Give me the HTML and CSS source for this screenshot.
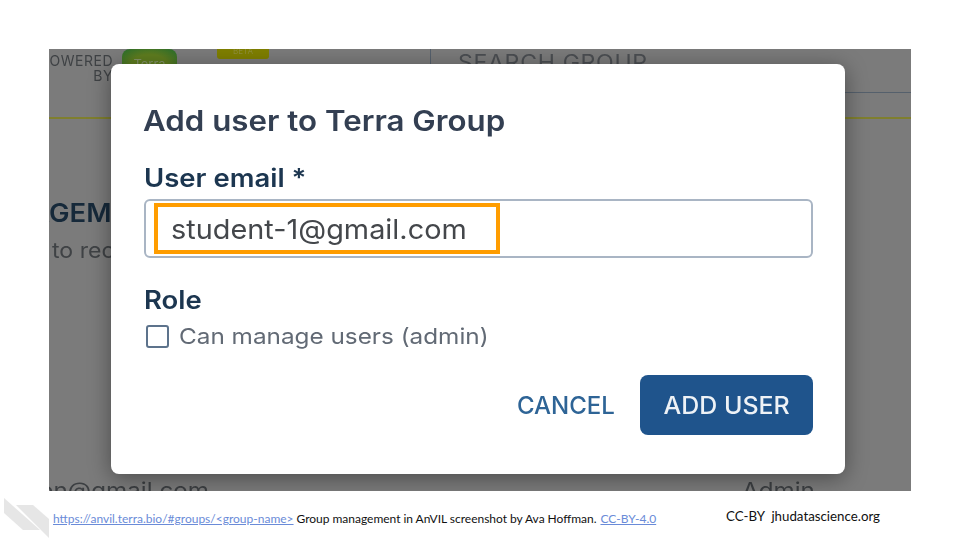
FILE: index.html
```html
<!DOCTYPE html>
<html lang="en">
<head>
<meta charset="utf-8">
<title>Add user to Terra Group</title>
<link rel="stylesheet" href="styles.css">
</head>
<body>
<div class="slide">
  <main class="shot">
    <div class="backdrop">
      <header class="topbar">
        <div class="powered"><span>POWERED</span><span>BY</span></div>
        <div class="terra-logo">Terra</div>
        <div class="beta">BETA</div>
        <div class="search"><span class="wide">SEARCH GROUP</span></div>
      </header>
      <div class="page-title"><span class="wide">AGEM</span></div>
      <div class="page-sub"><span class="wide">to rec</span></div>
      <div class="rows"><span class="wide">on@gmail.com</span><span class="wide">Admin</span></div>
    </div>
    <section class="modal">
      <h1 class="modal-title"><span class="wide">Add user to Terra Group</span></h1>
      <label class="field-label"><span class="wide">User email *</span></label>
      <div class="input">
        <span class="input-text wide">student-1@gmail.com</span>
        <div class="highlight"></div>
      </div>
      <h2 class="field-label role-label"><span class="wide">Role</span></h2>
      <div class="check-row"><span class="checkbox"></span><span class="wide check-text">Can manage users (admin)</span></div>
      <div class="actions">
        <span class="cancel"><span class="wide">CANCEL</span></span>
        <span class="primary"><span class="wide centered">ADD USER</span></span>
      </div>
    </section>
  </main>
  <footer class="footer">
    <svg class="mark" width="50" height="44" viewBox="0 0 50 44"><path d="M4 0 L40 32 L23 32 L4 15 Z" fill="#e6e6e6"/><path d="M16 7 L33 7 L49 21 L49 40 Z" fill="#e6e6e6"/></svg>
    <p class="caption"><a href="#">https://anvil.terra.bio/#groups/&lt;group-name&gt;</a> Group management in AnVIL screenshot by Ava Hoffman. <a class="license" href="#">CC-BY-4.0</a></p>
    <p class="credit">CC-BY &nbsp;jhudatascience.org</p>
  </footer>
</div>
</body>
</html>
```
FILE: styles.css
```css
* { box-sizing: border-box; }
html, body { margin: 0; padding: 0; }
body { width: 960px; height: 540px; overflow: hidden; background: #fff; font-family: "Inter", "Noto Sans", sans-serif; }
.slide { width: 960px; height: 540px; padding-top: 49px; display: flex; flex-direction: column; position: relative; }
.shot { position: relative; width: 862px; height: 442px; margin-left: 49px; overflow: hidden; background: #7b7b7b; flex: none; }
.wide { display: inline-block; transform: scaleX(1.1); transform-origin: left center; white-space: nowrap; }
.centered { transform-origin: center; transform: scaleX(1.04); }
.backdrop { height: 100%; color: #3c3f42; display: flex; flex-direction: column; filter: blur(.6px); }
.topbar { height: 70px; flex: none; border-bottom: 2px solid #7f7f2e; display: flex; align-items: flex-start; position: relative; }
.powered { width: 64px; margin-top: 4px; display: flex; flex-direction: column; align-items: flex-end; font-size: 14px; line-height: 15px; letter-spacing: .5px; color: #3f4245; overflow: hidden; white-space: nowrap; }
.terra-logo { width: 55px; height: 30px; margin-left: 9px; background: radial-gradient(ellipse at center, #5f7d1f 45%, #2a6e2c 95%); border-radius: 8px 8px 12px 12px; color: #84936a; font-size: 13px; text-align: center; padding-top: 7px; }
.beta { width: 52px; height: 10px; margin-left: 40px; background: #7f7f00; border-radius: 0 0 3px 3px; color: #8f8f3a; font-size: 8px; line-height: 4px; text-align: center; overflow: hidden; }
.search { margin-left: 161px; padding: 2px 0 0 27px; width: 481px; height: 44px; border-left: 1px solid #55606c; border-bottom: 1px solid #55606c; font-size: 21px; line-height: 24px; letter-spacing: .6px; color: #4b4e52; }
.page-title { margin: 79px 0 0 -19px; font-size: 25px; line-height: 30px; font-weight: 600; color: #16293a; }
.page-sub { margin: 10px 0 0 3px; font-size: 21px; line-height: 26px; color: #3f4245; }
.rows { margin-top: 214px; display: flex; font-size: 22px; line-height: 24px; color: #3c3f42; }
.rows .wide:first-child { margin-left: -10px; width: 703px; flex: none; }
.modal { position: absolute; left: 62px; top: 15px; width: 734px; height: 410px; background: #fff; border-radius: 8px; box-shadow: 0 4px 22px rgba(0,0,0,.4); padding: 40px 32px 0 33px; display: flex; flex-direction: column; filter: blur(.25px); }
.modal-title { margin: 0 0 0 -1px; font-size: 28px; line-height: 34px; font-weight: 600; color: #333f52; }
.modal-title .wide { transform: scaleX(1.117); }
.field-label { display: block; margin: 25px 0 0; font-size: 25px; line-height: 30px; font-weight: 600; color: #1c3650; }
.input { position: relative; height: 59px; margin-top: 6px; border: 2px solid #a9b5c4; border-radius: 6px; padding-left: 25px; display: flex; align-items: center; font-size: 27.5px; color: #44474b; }
.input-text { transform: scaleX(1.05); }
.highlight { position: absolute; left: 8px; top: 2px; width: 346px; height: 51px; border: 4px solid #ff9d00; }
.role-label { margin-top: 27px; }
.check-row { display: flex; align-items: center; gap: 10px; margin-top: 6px; font-size: 22px; line-height: 30px; color: #626a75; }
.check-text { transform: scaleX(1.105); }
.checkbox { width: 23px; height: 23px; margin-left: 2px; border: 2px solid #5d738c; border-radius: 3px; flex: none; }
.actions { display: flex; align-items: center; justify-content: flex-end; gap: 26px; margin-top: 24px; font-size: 24px; font-weight: 500; }
.cancel { width: 97px; color: #2e6496; }
.cancel .wide { transform: none; }
.primary { width: 173px; height: 60px; background: #1f548c; color: #eef2f6; border-radius: 8px; display: flex; align-items: center; justify-content: center; }
.footer { flex: 1; position: relative; font-family: "Lato", sans-serif; color: #111; }
.mark { position: absolute; left: 0; top: 7px; }
.caption { margin: 0; position: absolute; left: 53px; top: 20px; font-size: 12px; line-height: 16px; white-space: nowrap; word-spacing: -.15px; }
.caption a { color: #6a8bd8; }
.caption .license { margin-left: 1px; }
.credit { margin: 0; position: absolute; left: 726px; top: 16px; font-size: 13.3px; line-height: 18px; white-space: nowrap; }
```
